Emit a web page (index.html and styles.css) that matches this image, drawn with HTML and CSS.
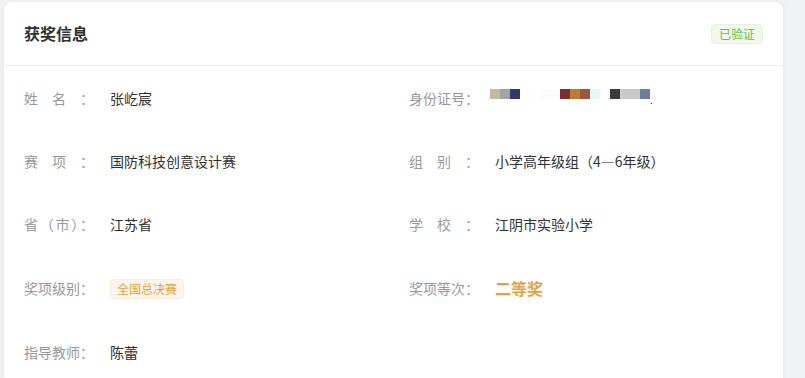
FILE: index.html
```html
<!DOCTYPE html>
<html lang="zh-CN">
<head>
<meta charset="utf-8">
<title>获奖信息</title>
<link rel="stylesheet" href="styles.css">
</head>
<body>
<div class="card">
  <div class="card-header">
    <span class="title">获奖信息</span>
    <span class="tag tag-success">已验证</span>
  </div>
  <div class="card-body">
    <div class="item"><span class="label">姓名：</span><span class="value">张屹宸</span></div>
    <div class="item"><span class="label">身份证号：</span><span class="value mosaic"><span class="mq" style="background:#c8b99d"></span><span class="mq" style="background:#9aa8a5"></span><span class="mq" style="background:#303877"></span><span class="mq" style="background:#fefefe"></span><span class="mq" style="background:#fefefe"></span><span class="mq" style="background:#fbfcfd"></span><span class="mq" style="background:#fbfcfd"></span><span class="mq" style="background:#7e2f31"></span><span class="mq" style="background:#c27a30"></span><span class="mq" style="background:#9f5738"></span><span class="mq" style="background:#e0fbfb"></span><span class="mq" style="background:#ffffff"></span><span class="mq" style="background:#413838"></span><span class="mq" style="background:#c9c9c9"></span><span class="mq" style="background:#c9c9c9"></span><span class="mq" style="background:#6a809c"></span><span class="dot"></span></span></div>
    <div class="item"><span class="label">赛项：</span><span class="value">国防科技创意设计赛</span></div>
    <div class="item"><span class="label">组别：</span><span class="value">小学高年级组（4—6年级）</span></div>
    <div class="item"><span class="label">省（市）：</span><span class="value">江苏省</span></div>
    <div class="item"><span class="label">学校：</span><span class="value">江阴市实验小学</span></div>
    <div class="item tall"><span class="label">奖项级别：</span><span class="value"><span class="tag tag-warning">全国总决赛</span></span></div>
    <div class="item tall"><span class="label">奖项等次：</span><span class="value prize">二等奖</span></div>
    <div class="item"><span class="label">指导教师：</span><span class="value">陈蕾</span></div>
  </div>
</div>
</body>
</html>
```
FILE: styles.css
```css
* { box-sizing: border-box; }
html, body { margin: 0; }
body {
  background: #f0f2f5;
  padding: 2px 22px 0 4px;
  font-family: "Noto Sans CJK SC", "Noto Sans", "Liberation Sans", sans-serif;
  height: 378px;
  overflow: hidden;
}
.card {
  background: #fff;
  border-radius: 8px 8px 0 0;
  box-shadow: 0 1px 6px rgba(0, 0, 0, 0.06);
  height: 376px;
  overflow: hidden;
}
.card-header {
  height: 64px;
  padding: 0 20px;
  display: flex;
  align-items: center;
  justify-content: space-between;
  border-bottom: 1px solid #ebeef5;
}
.title {
  font-size: 16px;
  font-weight: 700;
  color: #303133;
  position: relative;
  top: -1px;
}
.tag {
  display: inline-flex;
  align-items: center;
  height: 20px;
  padding: 0 6px;
  font-size: 12px;
  border-radius: 4px;
  border: 1px solid;
  line-height: 1;
}
.tag-success {
  color: #67c23a;
  background: #f0f9eb;
  border-color: #e1f3d8;
  padding: 0 7px;
}
.tag-warning {
  color: #e6a23c;
  background: #fdf6ec;
  border-color: #faecd8;
}
.card-body {
  padding: 18px 20px 0 20px;
  display: grid;
  grid-template-columns: 385px 1fr;
  row-gap: 35px;
}
.item {
  display: flex;
  align-items: center;
  min-height: 28px;
  font-size: 14px;
}
.item.tall { min-height: 30px; }
.label {
  width: 70px;
  margin-right: 16px;
  color: #999;
  text-align: justify;
  text-align-last: justify;
  flex: none;
}
.value { color: #303133; }
.prize {
  color: #e6a23c;
  font-size: 16px;
  font-weight: 700;
  line-height: 30px;
}
.mosaic {
  display: flex;
  align-items: flex-start;
  height: 20px;
  padding-top: 1px;
  margin-left: -5px;
}
.mq {
  width: 10px;
  height: 10px;
  flex: none;
}
.dot {
  width: 1px;
  height: 1px;
  background: #333;
  margin-top: 14px;
  margin-left: 1px;
}
```
